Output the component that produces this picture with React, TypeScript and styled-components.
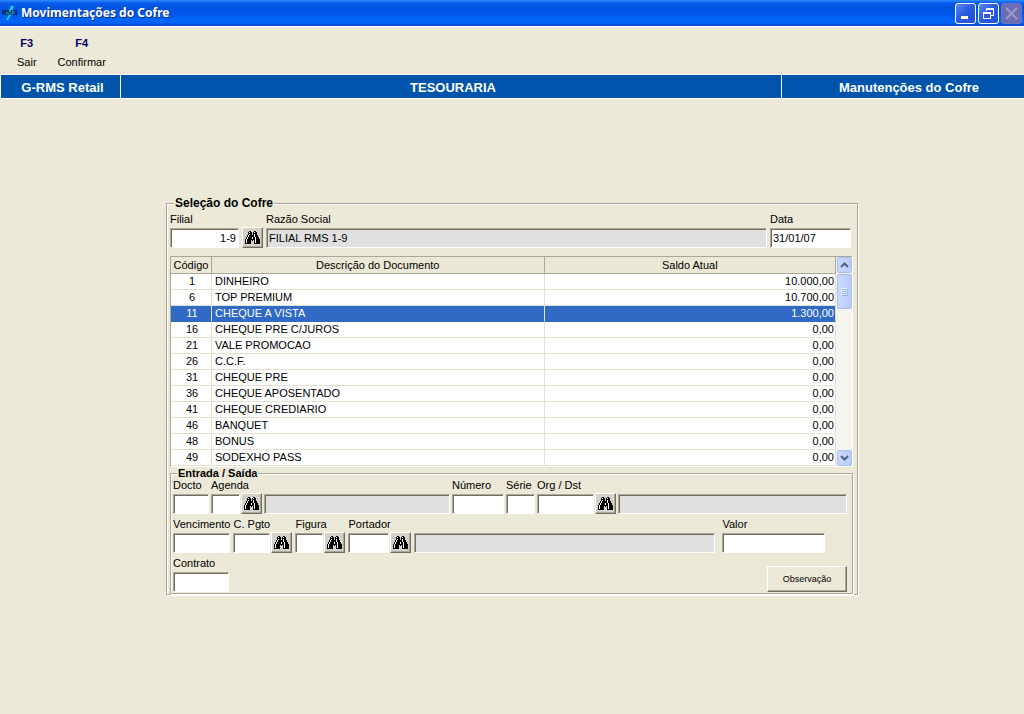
import React from "react";
import styled, { createGlobalStyle, css } from "styled-components";

const face = "#ece9d8";
const shade = "#aca899";
const navy = "#0054ab";

const GlobalStyle = createGlobalStyle`
  *, *::before, *::after { box-sizing: border-box; }
  body { margin: 0; background: ${face}; }
  body, button, input, table, fieldset {
    font-family: "Liberation Sans", Arial, sans-serif;
    font-size: 11px;
    color: #000;
  }
`;

const Window = styled.div`
  min-height: 100vh;
  background: ${face};
`;

const TitleBar = styled.header`
  display: flex;
  align-items: center;
  gap: 2px;
  height: 26px;
  padding: 0 2px 0;
  background: linear-gradient(#2a8bf8 0, #0a5cee 3px, #0052e0 7px, #0057ea 14px, #0266fd 21px, #0161f6 23px, #0040c8 26px);
`;

const TitleText = styled.h1`
  flex: 1;
  margin: 0 0 0 1px;
  font: bold 12px/20px "Noto Sans", sans-serif;
  color: #fff;
  text-shadow: 1px 1px 0 #0a2f8a;
`;

const CaptionButton = styled.button<{ $off?: boolean }>`
  display: grid;
  place-items: center;
  width: 21px;
  height: 21px;
  padding: 0;
  border: 1px solid ${(p) => (p.$off ? "#6b74c0" : "#fff")};
  border-radius: 3px;
  background: ${(p) => (p.$off ? "#6a6cb4" : "linear-gradient(135deg, #5c8cf4, #2a5ce0 45%, #2350d8)")};
`;

const Toolbar = styled.nav`
  display: flex;
  align-items: flex-start;
  gap: 17px;
  height: 48px;
  padding: 9px 0 0 15px;
  border-top: 1px solid #fff;
`;

const ToolButton = styled.button`
  display: flex;
  flex-direction: column;
  align-items: center;
  gap: 5px;
  padding: 0 2px;
  border: 0;
  background: none;
  line-height: 14px;
`;

const KeyName = styled.span`
  font-weight: bold;
  color: #000066;
`;

const Banner = styled.div`
  display: grid;
  grid-template-columns: 120px minmax(0, 661fr) minmax(0, 243fr);
  height: 25px;
  border-top: 1px solid #fff;
  border-bottom: 1px solid #fff;
  background: ${navy};
`;

const BannerCell = styled.div<{ $shift?: number }>`
  height: 23px;
  padding-left: ${(p) => p.$shift ?? 0}px;
  border-left: 1px solid #fff;
  font: bold 13px/26px "Liberation Sans", Arial, sans-serif;
  color: #fff;
  text-align: center;
  white-space: nowrap;
`;

const Main = styled.main`
  max-width: 692px;
  margin: 0 auto;
  padding: 97px 0 20px;
`;

const Group = styled.fieldset`
  min-width: 0;
  margin: 0;
  padding: 3px 4px 0 3px;
  border: 1px solid ${shade};
  box-shadow: 1px 1px 0 #fff, inset 1px 1px 0 #fff;
`;

const InnerGroup = styled(Group)`
  padding: 0 5px 1px 2px;
`;

const Legend = styled.legend<{ $small?: boolean }>`
  margin-left: 4px;
  padding: 0 1px;
  background: ${face};
  font-size: ${(p) => (p.$small ? 11 : 12)}px;
  font-weight: bold;
  line-height: ${(p) => (p.$small ? 12 : 14)}px;
`;

const Row = styled.div<{ $gap?: number }>`
  display: flex;
  align-items: flex-end;
  gap: ${(p) => p.$gap ?? 3}px;
`;

const HeadRow = styled(Row)`
  padding-right: 2px;
`;

const FieldBox = styled.div<{ $width?: number }>`
  display: flex;
  flex-direction: column;
  gap: 2px;
  ${(p) => (p.$width ? css`flex: 0 0 ${p.$width}px;` : css`flex: 1; min-width: 0;`)}
`;

const Label = styled.label`
  line-height: 12px;
  min-height: 12px;
  white-space: nowrap;
`;

const Controls = styled.div<{ $gap: number }>`
  display: flex;
  align-items: center;
  gap: ${(p) => p.$gap}px;
  height: 21px;
`;

const TextBox = styled.input<{ $end?: boolean }>`
  flex: 1;
  min-width: 0;
  width: 100%;
  height: 20px;
  padding: 0 2px;
  border: 1px solid #fff;
  border-top-color: ${shade};
  border-left-color: ${shade};
  border-radius: 0;
  box-shadow: inset 1px 1px 0 #716f64;
  background: #fff;
  text-align: ${(p) => (p.$end ? "right" : "left")};
  &:read-only { background: #e0e0e0; }
`;

const raised = css`
  border: 1px solid;
  border-color: #fff #716f64 #716f64 #fff;
  box-shadow: inset -1px -1px 0 ${shade};
`;

const SearchButton = styled.button`
  ${raised}
  display: grid;
  place-items: center;
  flex: 0 0 21px;
  height: 21px;
  padding: 0 1px 1px 0;
  background: #d4d2c8;
`;

const PushButton = styled.button`
  ${raised}
  width: 80px;
  height: 26px;
  padding: 0;
  background: ${face};
  font-size: 9px;
`;

const Spread = styled.div`
  display: flex;
  justify-content: space-between;
  align-items: flex-end;
`;

const FormStack = styled.div`
  display: flex;
  flex-direction: column;
  gap: 4px;
`;

const GridFrame = styled.div`
  display: flex;
  margin: 8px 0 0;
  border: 1px solid ${shade};
  border-right-color: #fff;
  border-bottom-color: #fff;
  background: #fff;
`;

const DataTable = styled.table`
  flex: 1;
  border-collapse: separate;
  border-spacing: 0;
  table-layout: fixed;
`;

const HeadCell = styled.th<{ $width?: string }>`
  width: ${(p) => p.$width ?? "auto"};
  height: 17px;
  padding: 0;
  border-right: 1px solid ${shade};
  border-bottom: 1px solid ${shade};
  background: #ebe8d7;
  font-weight: normal;
  line-height: 16px;
`;

const Cell = styled.td<{ $align?: string }>`
  height: 16px;
  padding: 0 ${(p) => (p.$align ? 1 : 2)}px 0 3px;
  border-right: 1px solid #e4e1d0;
  border-bottom: 1px solid #e4e1d0;
  line-height: 15px;
  text-align: ${(p) => p.$align ?? "left"};
`;

const DataRow = styled.tr<{ $selected?: boolean }>`
  ${(p) => p.$selected && css`
    background: #316ac5;
    color: #fff;
    ${Cell} { border-bottom-color: #316ac5; }
  `}
`;

const ScrollTrack = styled.div`
  display: flex;
  flex-direction: column;
  width: 16px;
  padding: 0 0 0 1px;
  background: #f5f5f0;
`;

const scrollPart = css`
  display: grid;
  place-items: center;
  padding: 0;
  border: 1px solid #a9bdf0;
  border-radius: 2px;
  background: linear-gradient(90deg, #cbd9fd, #b9cbfa);
`;

const ScrollButton = styled.button`
  ${scrollPart}
  height: 16px;
`;

const ScrollThumb = styled.div`
  ${scrollPart}
  height: 35px;
  margin: 1px 0 auto;
`;

const BINOCULARS = [
  "....XX...XX....",
  "...XwXX.XwXX...",
  "...XXXX.XXXX...",
  "...XwXX.XwXX...",
  "..XwXXXXXwXXX..",
  "..XwXXXXXwXXX..",
  ".XwXXXXwXXwXXX.",
  ".XwXXXXwXXwXXX.",
  "XwXXXXXXXXwXXXX",
  "XwXXXX.X.XwXXXX",
  "XwXXXX...XwXXXX",
  "XwXXXX...XwXXXX",
  "XXXXXX...XXXXXX",
];

function pixels(mark: string) {
  return BINOCULARS.flatMap((line, y) =>
    [...line].map((c, x) => (c === mark ? `M${x} ${y}h1v1h-1z` : "")),
  ).join("");
}

function Search({ name }: { name: string }) {
  return (
    <SearchButton type="button" aria-label={name}>
      <svg width="15" height="13" viewBox="0 0 15 13" shapeRendering="crispEdges">
        <path d={pixels("X")} fill="#000" />
        <path d={pixels("w")} fill="#fff" />
      </svg>
    </SearchButton>
  );
}

type FieldProps = {
  id: string;
  label?: string;
  name?: string;
  width?: number;
  gap?: number;
  value?: string;
  end?: boolean;
  readOnly?: boolean;
  search?: boolean;
};

function Field({ id, label, name, width, gap = 1, value, end, readOnly, search }: FieldProps) {
  return (
    <FieldBox $width={width}>
      {label && <Label htmlFor={id}>{label}</Label>}
      <Controls $gap={gap}>
        <TextBox id={id} defaultValue={value} $end={end} readOnly={readOnly} aria-label={label ? undefined : name} />
        {search && <Search name={`Pesquisar ${label}`} />}
      </Controls>
    </FieldBox>
  );
}

const ROWS = [
  ["1", "DINHEIRO", "10.000,00"],
  ["6", "TOP PREMIUM", "10.700,00"],
  ["11", "CHEQUE A VISTA", "1.300,00"],
  ["16", "CHEQUE PRE C/JUROS", "0,00"],
  ["21", "VALE PROMOCAO", "0,00"],
  ["26", "C.C.F.", "0,00"],
  ["31", "CHEQUE PRE", "0,00"],
  ["36", "CHEQUE APOSENTADO", "0,00"],
  ["41", "CHEQUE CREDIARIO", "0,00"],
  ["46", "BANQUET", "0,00"],
  ["48", "BONUS", "0,00"],
  ["49", "SODEXHO PASS", "0,00"],
];

function AppIcon() {
  return (
    <svg width="16" height="16" viewBox="0 0 16 16" aria-hidden="true">
      <path d="M4 15 7 10 3 8 7 6 9 1 12 1 10 6 13 7 9 10 6 15z" fill="#20d0e8" />
      <text x="0" y="10" fontSize="7" fontWeight="bold" fill="#041c40">RMS</text>
    </svg>
  );
}

export default function App() {
  return (
    <Window>
      <GlobalStyle />
      <TitleBar>
        <AppIcon />
        <TitleText>Movimentações do Cofre</TitleText>
        <CaptionButton type="button" aria-label="Minimizar">
          <svg width="15" height="15"><path d="M3 10h7v3H3z" fill="#fff" /></svg>
        </CaptionButton>
        <CaptionButton type="button" aria-label="Restaurar">
          <svg width="15" height="15" fill="none" stroke="#fff" shapeRendering="crispEdges">
            <path d="M5.500 5V3M5 2.500h8M5 3.500h8M12.500 3v6.500h-3M2.500 6.500h7v6h-7zM2 7.500h8" />
          </svg>
        </CaptionButton>
        <CaptionButton type="button" aria-label="Fechar" $off disabled>
          <svg width="15" height="15"><path d="M2 2 13 13M13 2 2 13" stroke="#a09cc8" strokeWidth="2" /></svg>
        </CaptionButton>
      </TitleBar>
      <Toolbar>
        <ToolButton type="button"><KeyName>F3</KeyName><span>Sair</span></ToolButton>
        <ToolButton type="button"><KeyName>F4</KeyName><span>Confirmar</span></ToolButton>
      </Toolbar>
      <Banner>
        <BannerCell $shift={4}>G-RMS Retail</BannerCell>
        <BannerCell $shift={4}>TESOURARIA</BannerCell>
        <BannerCell $shift={12}>Manutenções do Cofre</BannerCell>
      </Banner>
      <Main>
        <Group>
          <Legend>Seleção do Cofre</Legend>
          <HeadRow>
            <Field id="filial" label="Filial" width={93} gap={3} value="1-9" end search />
            <Field id="razao" label="Razão Social" value="FILIAL RMS 1-9" readOnly />
            <Field id="data" label="Data" width={81} value="31/01/07" />
          </HeadRow>
          <GridFrame>
            <DataTable>
              <thead>
                <tr>
                  <HeadCell $width="41px">Código</HeadCell>
                  <HeadCell $width="50%">Descrição do Documento</HeadCell>
                  <HeadCell>Saldo Atual</HeadCell>
                </tr>
              </thead>
              <tbody>
                {ROWS.map(([code, name, total]) => (
                  <DataRow key={code} $selected={code === "11"}>
                    <Cell $align="center">{code}</Cell>
                    <Cell>{name}</Cell>
                    <Cell $align="right">{total}</Cell>
                  </DataRow>
                ))}
              </tbody>
            </DataTable>
            <ScrollTrack>
              <ScrollButton type="button" aria-label="Subir">
                <svg width="9" height="6"><path d="M1 5 4.500 1.500 8 5" fill="none" stroke="#4d6185" strokeWidth="2" /></svg>
              </ScrollButton>
              <ScrollThumb>
                <svg width="7" height="8" shapeRendering="crispEdges"><path d="M0 .5h6M0 2.500h6M0 4.500h6M0 6.500h6" stroke="#eef4fe" /><path d="M1 1.500h6M1 3.500h6M1 5.500h6M1 7.500h6" stroke="#8cb0f8" /></svg>
              </ScrollThumb>
              <ScrollButton type="button" aria-label="Descer">
                <svg width="9" height="6"><path d="M1 1 4.500 4.500 8 1" fill="none" stroke="#4d6185" strokeWidth="2" /></svg>
              </ScrollButton>
            </ScrollTrack>
          </GridFrame>
          <InnerGroup>
            <Legend $small>Entrada / Saída</Legend>
            <FormStack>
              <Row $gap={2}>
                <Field id="docto" label="Docto" width={36} />
                <Field id="agenda" label="Agenda" width={51} search />
                <Field id="agenda-nome" name="Nome da agenda" width={186} readOnly />
                <Field id="numero" label="Número" width={52} />
                <Field id="serie" label="Série" width={29} />
                <Field id="org" label="Org / Dst" width={79} search />
                <Field id="org-nome" name="Nome da origem" readOnly />
              </Row>
              <Row $gap={3}>
                <Field id="vencimento" label="Vencimento" width={57} />
                <Field id="pgto" label="C. Pgto" width={59} search />
                <Field id="figura" label="Figura" width={50} search />
                <Field id="portador" label="Portador" width={63} search />
                <Row $gap={7}>
                  <Field id="portador-nome" name="Nome do portador" width={301} readOnly />
                  <Field id="valor" label="Valor" width={103} />
                </Row>
              </Row>
              <Spread>
                <Field id="contrato" label="Contrato" width={56} />
                <PushButton type="button">Observação</PushButton>
              </Spread>
            </FormStack>
          </InnerGroup>
        </Group>
      </Main>
    </Window>
  );
}
